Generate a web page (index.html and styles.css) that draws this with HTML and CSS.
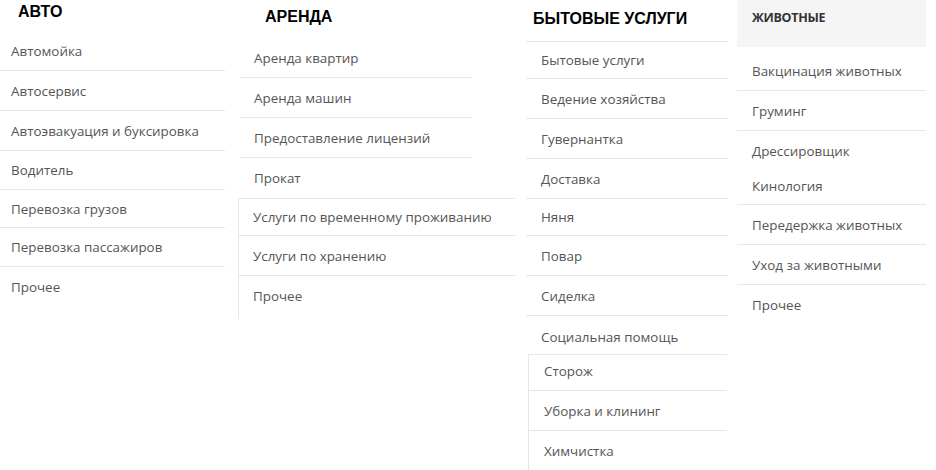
FILE: index.html
```html
<!DOCTYPE html>
<html lang="ru">
<head>
<meta charset="utf-8">
<link rel="stylesheet" href="styles.css">
</head>
<body>
<div class="page">
  <section class="col col-auto">
    <h2 class="head head-auto">АВТО</h2>
    <div class="list list-auto">
      <div class="item">Автомойка</div>
      <div class="item">Автосервис</div>
      <div class="item">Автоэвакуация и буксировка</div>
      <div class="item h38">Водитель</div>
      <div class="item h37">Перевозка грузов</div>
      <div class="item h38">Перевозка пассажиров</div>
      <div class="item last h40">Прочее</div>
    </div>
  </section>

  <section class="col col-rent">
    <h2 class="head head-rent">АРЕНДА</h2>
    <div class="list list-rent">
      <div class="item">Аренда квартир</div>
      <div class="item">Аренда машин</div>
      <div class="item">Предоставление лицензий</div>
      <div class="item last h40">Прокат</div>
    </div>
    <div class="box box-rent">
      <div class="item h36">Услуги по временному проживанию</div>
      <div class="item">Услуги по хранению</div>
      <div class="item last h42 up">Прочее</div>
    </div>
  </section>

  <section class="col col-home">
    <h2 class="head head-home">БЫТОВЫЕ УСЛУГИ</h2>
    <div class="list list-home">
      <div class="item h36">Бытовые услуги</div>
      <div class="item">Ведение хозяйства</div>
      <div class="item">Гувернантка</div>
      <div class="item">Доставка</div>
      <div class="item h36">Няня</div>
      <div class="item">Повар</div>
      <div class="item">Сиделка</div>
      <div class="item last h37 low">Социальная помощь</div>
    </div>
    <div class="box box-home">
      <div class="item h35 up">Сторож</div>
      <div class="item">Уборка и клининг</div>
      <div class="item">Химчистка</div>
    </div>
  </section>

  <section class="col col-pets">
    <h2 class="head head-pets">ЖИВОТНЫЕ</h2>
    <div class="list list-pets">
      <div class="item">Вакцинация животных</div>
      <div class="item">Груминг</div>
      <div class="item last h40">Дрессировщик</div>
      <div class="item h33 up">Кинология</div>
      <div class="item">Передержка животных</div>
      <div class="item">Уход за животными</div>
      <div class="item last h40">Прочее</div>
    </div>
  </section>
</div>
</body>
</html>
```

FILE: styles.css
```css
* { box-sizing: border-box; }
html, body { margin: 0; padding: 0; background: #fff; }
body {
  font-family: "Open Sans", "Noto Sans", sans-serif;
  font-size: 13.4px;
  color: #555;
  width: 936px;
  height: 470px;
  overflow: hidden;
}
.page {
  display: flex;
  align-items: flex-start;
}
.col { display: flex; flex-direction: column; }
.col-auto { width: 225px; }
.col-rent { width: 277px; margin-left: 13px; }
.col-home { width: 222px; }
.col-pets { width: 189px; }

.head {
  margin: 0;
  font-family: "Liberation Sans", Arial, sans-serif;
  font-weight: bold;
  font-size: 16px;
  line-height: 24px;
  color: #000;
}
.head-auto { height: 31px; padding-left: 18px; }
.head-rent { height: 38px; padding-top: 5px; padding-left: 27px; }
.head-home { height: 41px; padding-top: 7px; padding-left: 18px; }
.head-pets {
  height: 47px;
  padding: 6px 0 0 15px;
  background: #f5f5f5;
  font-family: "Open Sans", sans-serif;
  font-size: 12.5px;
  color: #333;
  letter-spacing: -0.3px;
}

.item {
  display: flex;
  align-items: center;
  height: 40px;
  border-bottom: 1px solid #e6e6e6;
  white-space: nowrap;
}
.item.last { border-bottom: none; }
.h33 { height: 34px; }
.h35 { height: 36px; }
.h36 { height: 37px; }
.h37 { height: 38px; }
.h38 { height: 39px; }
.h40 { height: 40px; }
.h42 { height: 43px; }
.low { padding-top: 4px; }
.up { padding-bottom: 4px; }

.list-auto .item { padding-left: 11px; }
.list-rent { width: 232px; margin-left: 2px; }
.list-rent .item { padding-left: 14px; }
.box {
  border-top: 1px solid #e6e6e6;
  border-left: 1px solid #e6e6e6;
}
.box-rent { width: 277px; }
.box-rent .item { padding-left: 14px; }

.list-home {
  width: 202px;
  margin-left: 11px;
  border-top: 1px solid #e6e6e6;
}
.list-home .item { padding-left: 15px; }
.box-home { width: 199px; margin-left: 13px; }
.box-home .item { padding-left: 15px; }

.list-pets { margin-top: 4px; }
.list-pets .item { padding-left: 15px; }
```
